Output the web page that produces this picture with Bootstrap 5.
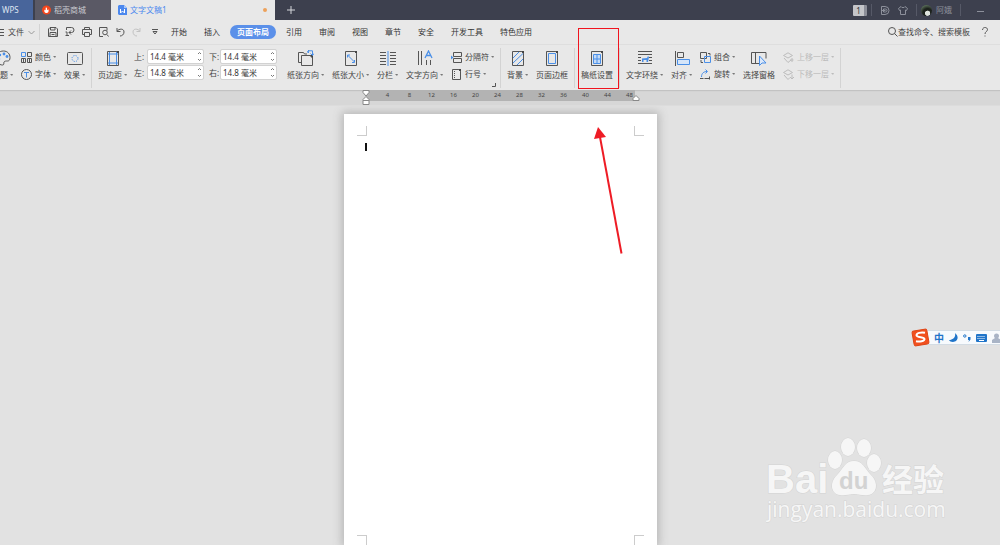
<!DOCTYPE html>
<html lang="zh-CN">
<head>
<meta charset="utf-8">
<meta name="viewport" content="width=device-width, initial-scale=1">
<title>文字文稿1 - WPS</title>
<link href="https://cdn.jsdelivr.net/npm/bootstrap@5.3.0/dist/css/bootstrap.min.css" rel="stylesheet">
<style>
  :root { --ink: #444; --accent: #4a8fe7; --chrome: #e8e8e8; }
  body { font: 8px/12px "Noto Sans", "Noto Sans CJK SC", sans-serif; color: var(--ink); background: #e2e2e2; overflow-x: hidden; }
  svg { display: block; flex: none; fill: none; stroke: #555; stroke-width: 1; }
  .btn { --bs-btn-font-size: 8px; --bs-btn-line-height: 12px; --bs-btn-color: var(--ink); --bs-btn-border-width: 0; --bs-btn-border-radius: 2px; --bs-btn-padding-x: 0; --bs-btn-padding-y: 0; white-space: nowrap; }
  .btn:disabled { --bs-btn-disabled-color: #bcbcbc; --bs-btn-disabled-opacity: 1; }
  .btn:disabled svg { stroke: #bcbcbc; }
  a { color: inherit; text-decoration: none; white-space: nowrap; }

  .titlebar { height: 20px; background: #3d404e; color: #8d909b; }
  .titlebar svg { stroke: #8d909b; }
  .tab-home { width: 33px; padding-left: 2px; background: #48659b; color: #dfe6f2; }
  .tab-store { width: 76px; margin-left: 2px; padding-left: 7px; gap: 3px; background: #5a5965; color: #c9c9ce; }
  .tab-doc { width: 164px; padding: 0 8px 0 7px; gap: 3px; background: var(--chrome); color: #4c88ee; }
  .tab-home, .tab-store, .tab-doc { display: flex; align-items: center; }
  .dot { width: 4px; height: 4px; border-radius: 50%; background: #eda15a; }
  .divide { width: 1px; height: 12px; background: #565967; }
  .count { width: 14px; height: 11px; line-height: 11px; background: #c4c5c9; border-right: 3px solid #8c8e98; color: #333; border-radius: 1px; }
  .avatar { width: 11px; height: 11px; border-radius: 50%; background: radial-gradient(circle at 60% 75%, #dde3dc 0 22%, #1c221c 28% 45%, #5c725a 80%); }

  .menubar { height: 25px; background: var(--chrome); border-bottom: 1px solid #dedede; }
  .quick { gap: 7px; }
  .menus { gap: 17px; margin-left: 13px; color: #333; }
  .menus .current { padding: 0 7px; margin: 0 -7px; border-radius: 7px; line-height: 14px; background: #5b90e9; color: #fff; font-weight: 700; }
  .rule { width: 1px; flex: none; align-self: stretch; background: #d3d3d3; }

  .ribbon { height: 45px; padding: 3px 0 2px; margin-left: -8px; gap: 8px; background: var(--chrome); box-shadow: 0 1px 1px #c2c2c2; position: relative; }
  .ribbon > * { flex: none; }
  .ribbon > .rule { margin: 0 -2px; }
  .tool { display: flex; flex-direction: column; align-items: center; padding-top: 2px; gap: 3px; height: 34px; }
  .tool svg { width: 16px; height: 16px; }
  .pair { display: flex; flex-direction: column; gap: 5px; padding-top: 3px; }
  .pair .btn { display: flex; align-items: center; gap: 3px; }
  .pair svg { width: 11px; height: 11px; }
  .caret::after { content: ""; display: inline-block; margin-left: 2px; vertical-align: 2px; border: solid transparent; border-width: 2px 1px 0 2px; border-top-color: #777; }
  .btn:disabled .caret::after { border-top-color: #bcbcbc; }
  .margins { display: grid; grid-template-columns: 10px 55px 12px 57px; column-gap: 3px; row-gap: 1px; margin: 1px 2px 0 -1px; align-content: start; align-items: center; }
  .margins label:nth-of-type(even) { padding-left: 1px; }
  .spin { position: relative; width: 57px; }
  .spin .form-control { height: 15px; padding: 0 2px; font: inherit; color: #333; border: 1px solid #d2d2d2; border-radius: 2px; }
  .spin svg { position: absolute; right: 2px; top: 2px; stroke: #777; }
  .launcher { position: absolute; right: -2px; bottom: 1px; }
  .callout { position: absolute; left: -3px; right: -6px; top: -20px; height: 61px; border: 1px solid #f0141e; pointer-events: none; }
  .pointer { position: absolute; left: 10px; top: 76px; z-index: 3; pointer-events: none; }
  .b { stroke: var(--accent); }

  .ruler { height: 16px; background: #d7d7d7; border-bottom: 1px solid #dcdcdc; }
  .scale { width: 269px; height: 11px; padding-left: 11px; background: #b3b3b3; font-size: 6px; line-height: 11px; color: #444; position: relative; }
  .scale span { flex: none; width: 22px; text-align: center; }
  .scale svg { position: absolute; top: 0; fill: #fff; stroke: #888; }
  .indent { left: -4px; }
  .outdent { right: -5px; }

  .paper { width: 313px; margin-top: 8px; padding: 12px 13px 0; background: #fff; box-shadow: 0 0 9px 2px #b5b5b5; }
  .crop { width: 10px; height: 10px; border-color: #ccc !important; }
  .write { width: 2px; height: 8px; margin: 7px 0 0 8px; background: #111; }
  .ime { position: absolute; right: 0; top: 328px; height: 19px; }
  .ime .strip { height: 15px; gap: 5px; margin-left: -12px; padding: 0 0 0 15px; background: #f7fafd; border: 1px solid #d3dce4; border-right: 0; font-weight: 700; font-size: 10px; color: #1f74c9; width: 82px; overflow: hidden; }
  .logo { position: relative; z-index: 1; }
  .brand { position: absolute; right: 52px; bottom: 20px; }
  .brand text, .brand .paw { fill: #f6f6f6; stroke: #d3d3d3; stroke-width: 1; paint-order: stroke; }
</style>
</head>
<body class="min-vh-100 d-flex flex-column position-relative">

<header>
  <div class="titlebar d-flex align-items-center">
    <a href="#" class="tab-home h-100">WPS</a>
    <a href="#" class="tab-store h-100">
      <svg width="9" height="10" viewBox="0 0 9 10"><circle cx="4.5" cy="5" r="4.5" fill="#f4471c" stroke="none"/><path d="M4 2.2c2 1 .6 2.4 1.2 2.8.5.3.8-.4.7-1C7.400 5.500 6.500 8 4.500 8 2.300 8 1.800 6 2.600 4.500c.3.8.8.9 1 .3.3-.9-.2-1.600.4-2.600z" fill="#fff" stroke="none"/></svg>
      稻壳商城</a>
    <a href="#" class="tab-doc h-100">
      <svg width="9" height="10" viewBox="0 0 9 10"><path d="M1 0h5l3 3v7H1L0 9V1z" fill="#4c88ee" stroke="none"/><path d="M6 0v3h3z" fill="#a9c7f8" stroke="none"/><path d="M2.500 4v4L4.500 6l2 2V4" style="stroke:#fff"/></svg>
      文字文稿1 <span class="dot ms-auto"></span></a>
    <button class="btn ms-2 px-1" aria-label="新建"><svg width="8" height="8" viewBox="0 0 8 8"><path d="M4 0v8M0 4h8" style="stroke:#d6d7db"/></svg></button>
    <div class="d-flex align-items-center ms-auto me-3">
      <span class="count text-center">1</span>
      <span class="divide ms-1"></span>
      <svg class="ms-2" width="10" height="9" viewBox="0 0 10 9"><path d="M1.500.5h3.500a4 4 0 0 1 0 8H1.500zM3.500 3h2a1.500 1.500 0 0 1 0 3h-2zM1.500 4.500h4"/></svg>
      <svg class="ms-2" width="10" height="9" viewBox="0 0 10 9"><path d="M3 .5L.5 2.500l1 2L2.500 4v4.500h5V4l1 .5 1-2L7 .5C6.500 2 3.500 2 3 .5z"/></svg>
      <span class="divide ms-2 me-1"></span>
      <span class="avatar"></span>
      <span class="ms-1">阿娥</span>
      <span class="divide ms-2 me-3"></span>
      <svg width="7" height="3" viewBox="0 0 7 3"><path d="M0 2.500h7"/></svg>
    </div>
  </div>

  <nav class="menubar d-flex align-items-center">
    <button class="btn d-flex align-items-center">
      <svg width="8" height="8" viewBox="0 0 8 8"><path d="M0 1.500h4M0 4.500h4M0 7.500h4"/></svg>文件
      <svg class="ms-1" width="7" height="5" viewBox="0 0 7 5"><path d="M.5 1l3 3 3-3" stroke="#999"/></svg></button>
    <span class="rule my-1 ms-1 me-2"></span>
    <div class="quick d-flex align-items-center">
      <button class="btn" aria-label="保存"><svg width="10" height="10" viewBox="0 0 10 10"><path d="M.5 2L2 .5h6L9.500 2v7.500h-9zM2.500.5v2.500h4.500V.5M2 9.500V5.500h6v4M3.500 7.500h3"/></svg></button>
      <button class="btn" aria-label="输出为PDF"><svg width="10" height="10" viewBox="0 0 10 10"><path d="M1.500 3V.5h5a2.500 2.500 0 0 1 0 5H4M6 3.500l-2 2 2 2M.5 5h1.500v3.500H.5M2 8.500h2"/></svg></button>
      <button class="btn" aria-label="打印"><svg width="10" height="10" viewBox="0 0 10 10"><path d="M2.500 2.500v-2h5v2M2.500 7.500h-2v-5h9v5h-2M2.500 5.500h5v4h-5z"/></svg></button>
      <button class="btn" aria-label="打印预览"><svg width="10" height="10" viewBox="0 0 10 10"><path d="M4 9.500H.5v-9h7.500v3M8 7.500l1.500 2"/><circle cx="6" cy="5.500" r="2.300"/></svg></button>
      <button class="btn" aria-label="撤销"><svg width="9" height="10" viewBox="0 0 9 10"><path d="M1 1v3.500h3.500M1 4.200C3 1.500 8 1.200 8 5 8 7.500 6 9 4 9"/></svg></button>
      <button class="btn" aria-label="恢复"><svg width="9" height="10" viewBox="0 0 9 10" style="stroke:#c2c2c2"><path d="M8 1v3.500H4.500M8 4.200C6 1.500 1 1.200 1 5c0 2.500 2 4 4 4"/></svg></button>
      <button class="btn ms-1" aria-label="更多"><svg width="6" height="6" viewBox="0 0 6 6"><path d="M0 .5h6M1 2.500h4L3 5z"/></svg></button>
    </div>
    <div class="menus d-flex align-items-center">
      <a href="#">开始</a><a href="#">插入</a><a href="#" class="current">页面布局</a><a href="#">引用</a><a href="#">审阅</a><a href="#">视图</a><a href="#">章节</a><a href="#">安全</a><a href="#">开发工具</a><a href="#">特色应用</a>
    </div>
    <button class="btn ms-auto d-flex align-items-center"><svg width="10" height="10" viewBox="0 0 10 10"><circle cx="4" cy="4" r="3.500"/><path d="M6.500 6.500l3 3"/></svg>查找命令、搜索模板</button>
    <button class="btn ms-2 me-2 px-1" aria-label="帮助"><svg width="6" height="10" viewBox="0 0 6 10"><path d="M.5 3C.5-.3 5.500-.3 5.500 2.700 5.500 4.500 3 4.500 3 7M3 8.500v1"/></svg></button>
  </nav>

  <div class="ribbon d-flex">
    <button class="btn tool"><svg viewBox="0 0 16 16"><path d="M8.500 1C4 1 1 4 1 8s3 7 6.500 7c2 0 1-2 1.500-3s2-1 3.500-1S15 10 15 7.500C15 4 12.500 1 8.500 1z"/><g fill="#4a8fe7" stroke="none"><circle cx="9" cy="4" r="1.400"/><circle cx="12" cy="6.500" r="1.400"/><circle cx="5" cy="5" r="1.200"/><circle cx="4" cy="9" r="1.200"/></g></svg><span class="caret">主题</span></button>
    <div class="pair">
      <button class="btn"><svg viewBox="0 0 11 11"><path class="b" d="M.5.5h4v4h-4z"/><path d="M6.500.5h4v4h-4zM.5 6.500h4v4h-4zM6.500 6.500h4v4h-4zM8.500 6.500v4M2.500 6.500v4"/></svg><span class="caret">颜色</span></button>
      <button class="btn"><svg viewBox="0 0 11 11"><circle cx="5.500" cy="5.500" r="5"/><path class="b" d="M3 3.500h5M5.500 3.500v5"/></svg><span class="caret">字体</span></button>
    </div>
    <button class="btn tool"><svg viewBox="0 0 16 16"><rect x=".5" y="2.500" width="15" height="12" rx="1"/><circle class="b" cx="8" cy="8.500" r="3" stroke-dasharray="1.200 1.200"/></svg><span class="caret">效果</span></button>
    <span class="rule"></span>
    <button class="btn tool"><svg viewBox="0 0 16 16"><path d="M2.500 1.500h9l2 2v12h-11z"/><path class="b" d="M4.500 2v13M11.500 2v13M3 4h10M3 13h10"/><path d="M11 1l3 3V1z" fill="#444" stroke="none"/></svg><span class="caret">页边距</span></button>
    <div class="margins">
      <label for="mt">上:</label><div class="spin"><input id="mt" class="form-control" value="14.4 毫米"><svg width="5" height="11" viewBox="0 0 5 11"><path d="M1 3l1.500-1.500L4 3M1 8l1.500 1.500L4 8"/></svg></div>
      <label for="mb" class="ps-1">下:</label><div class="spin"><input id="mb" class="form-control" value="14.4 毫米"><svg width="5" height="11" viewBox="0 0 5 11"><path d="M1 3l1.500-1.500L4 3M1 8l1.500 1.500L4 8"/></svg></div>
      <label for="ml">左:</label><div class="spin"><input id="ml" class="form-control" value="14.8 毫米"><svg width="5" height="11" viewBox="0 0 5 11"><path d="M1 3l1.500-1.500L4 3M1 8l1.500 1.500L4 8"/></svg></div>
      <label for="mr" class="ps-1">右:</label><div class="spin"><input id="mr" class="form-control" value="14.8 毫米"><svg width="5" height="11" viewBox="0 0 5 11"><path d="M1 3l1.500-1.500L4 3M1 8l1.500 1.500L4 8"/></svg></div>
    </div>
    <button class="btn tool"><svg viewBox="0 0 16 16"><path d="M3 12.500H.5v-10h5l1 1.500H9"/><path d="M3.500 5.500H12l2.500 2.500v7.500h-11z"/><path d="M11.500 5l3.500 3.500V5z" fill="#444" stroke="none"/><path class="b" d="M9.500 2.500L11 .8h3.500V5M12.500 3.500l2 2 1.500-2M11 0l-1.500 1.500L11 3"/></svg><span class="caret">纸张方向</span></button>
    <button class="btn tool"><svg viewBox="0 0 16 16"><path d="M2.500 1.500h9l2 2v12h-11z"/><path d="M11 1l3 3V1z" fill="#444" stroke="none"/><path class="b" d="M4.500 5l7 7M4.500 7.500V5H7M9 12.500h2.500V10"/></svg><span class="caret">纸张大小</span></button>
    <button class="btn tool"><svg viewBox="0 0 16 16"><path d="M0 2.500h6M0 5.500h6M0 8.500h6M0 11.500h6M0 14.500h6M10 2.500h6M10 5.500h6M10 8.500h6M10 11.500h6M10 14.500h6"/><path class="b" d="M8 1v15"/></svg><span class="caret">分栏</span></button>
    <button class="btn tool"><svg viewBox="0 0 16 16"><path d="M1.500 1v14M4.500 1v14M9.500 10v5M13.500 10v5"/><path class="b" d="M8 8l3.500-7L15 8M9.200 5.500h4.600" stroke-width="1.300"/></svg><span class="caret">文字方向</span></button>
    <div class="pair position-relative">
      <button class="btn"><svg viewBox="0 0 11 11"><path d="M2.500 4.500v-4h8v4zM2.500 10.500v-4h8v4z"/><path d="M0 3.500l2.500 2L0 7.500z" fill="#4a8fe7" stroke="none"/></svg><span class="caret">分隔符</span></button>
      <button class="btn"><svg viewBox="0 0 11 11"><path d="M1.500.5h6l2 2v8h-8z"/><path d="M3.500 2v7" stroke-dasharray="1 1"/><path d="M7 0l3 3V0z" fill="#444" stroke="none"/></svg><span class="caret">行号</span></button>
      <svg class="launcher" style="width:4px;height:4px" viewBox="0 0 4 4"><path d="M0 3.500h3.500V0"/></svg>
    </div>
    <span class="rule"></span>
    <button class="btn tool"><svg viewBox="0 0 16 16"><path class="b" d="M3 8l6-6M3 13L13 3.500M7 15l6-6"/><path d="M2.500 1.500h9l2 2v12h-11z"/><path d="M11 1l3 3V1z" fill="#444" stroke="none"/></svg><span class="caret">背景</span></button>
    <button class="btn tool"><svg viewBox="0 0 16 16"><path d="M2.500 1.500h9l2 2v12h-11z"/><path class="b" d="M4.500 3.500h7v10h-7z"/><path d="M11 1l3 3V1z" fill="#444" stroke="none"/></svg><span>页面边框</span></button>
    <span class="rule"></span>
    <div class="position-relative">
      <button class="btn tool"><svg viewBox="0 0 16 16"><path d="M2.500 1.500h9l2 2v12h-11z"/><path class="b" fill="#c4dbf7" d="M4.500 4.500h7v9h-7zM8 4v10M4 9h8"/><path d="M11 1l3 3V1z" fill="#444" stroke="none"/></svg><span>稿纸设置</span></button>
      <span class="callout"></span>
      <svg class="pointer" width="36" height="132" viewBox="0 0 36 132"><path d="M30.500 129.500L9 13" stroke="#ee1c25" stroke-width="2"/><path d="M7 3L3 15l12-2z" fill="#ee1c25" stroke="none"/></svg>
    </div>
    <span class="rule"></span>
    <button class="btn tool"><svg viewBox="0 0 16 16"><path d="M1 1.500h14M1 4.500h14M1 7.500h3M1 10.500h3M12 7.500h3M12 10.500h3M1 13.500h14"/><path d="M5 12V8.500L10 8l1-2 1 1-1 5H9.500v-2h-3v2z" fill="#4a8fe7" stroke="none"/></svg><span class="caret">文字环绕</span></button>
    <button class="btn tool"><svg viewBox="0 0 16 16"><path d="M1.500 1v15M3.500 2.500h6v5h-6z"/><path class="b" fill="#d5e5f9" d="M3.500 9.500h12v5h-12z"/></svg><span class="caret">对齐</span></button>
    <div class="pair">
      <button class="btn"><svg viewBox="0 0 11 11"><path d="M.5.5h6v6h-6zM8 1.500h2v2M1 8v2.500h2"/><path class="b" d="M4.500 4.500h6v6h-6z"/></svg><span class="caret">组合</span></button>
      <button class="btn"><svg viewBox="0 0 11 11"><path class="b" d="M1.500 8C1.500 4 4 2.500 7 2.500M5.500.5l2 2-2 2"/><path d="M0 9.500h3.500M4.500 9.500h5M9.500 7.500v3"/></svg><span class="caret">旋转</span></button>
    </div>
    <button class="btn tool"><svg viewBox="0 0 16 16"><path d="M8 13.500H.5v-11h14.500v6M4.500 2.500v11"/><path class="b" fill="#dbe8fa" d="M8.500 6v9.500l2.500-2.500h4z"/></svg><span>选择窗格</span></button>
    <div class="pair">
      <button class="btn" disabled><svg viewBox="0 0 11 11"><path d="M.5 3.500L5 .8l4.500 2.700L5 6zM1 6l4 4.500L8 8M7 8h3.500M9 6v4"/></svg><span class="caret">上移一层</span></button>
      <button class="btn" disabled><svg viewBox="0 0 11 11"><path d="M.5 3.500L5 .8l4.500 2.700L5 6zM1 6l4 4.500 2-2M7 8l2 2 2-2M9 5.500V10"/></svg><span class="caret">下移一层</span></button>
    </div>
    <span class="rule"></span>
  </div>

  <div class="ruler d-flex justify-content-center">
    <div class="scale d-flex">
      <span>4</span><span>8</span><span>12</span><span>16</span><span>20</span><span>24</span><span>28</span><span>32</span><span>36</span><span>40</span><span>44</span><span>48</span>
      <svg class="indent" width="8" height="15" viewBox="0 0 8 15"><path d="M1 .5h6v2L4 6 1 2.500zM1 9.500L4 6.500l3 3v1H1zM1 10.500h6v4H1z"/></svg>
      <svg class="outdent" width="8" height="11" viewBox="0 0 8 11"><path d="M1 10.500v-2l3-3 3 3v2z"/></svg>
    </div>
  </div>
</header>

<main class="flex-grow-1 d-flex justify-content-center overflow-hidden">
  <article class="paper d-flex flex-column">
    <div class="d-flex justify-content-between">
      <span class="crop border-end border-bottom"></span><span class="crop border-start border-bottom"></span>
    </div>
    <div class="write"></div>
    <div class="d-flex justify-content-between mt-auto">
      <span class="crop border-end border-top"></span><span class="crop border-start border-top"></span>
    </div>
  </article>
</main>

<aside class="ime d-flex align-items-center">
  <svg class="logo" width="19" height="19" viewBox="0 0 19 19"><rect x="2" y="2" width="15" height="15" rx="2" transform="rotate(-10 9.500 9.500)" fill="#f1501f" stroke="#e04414"/><path d="M14 4.800C10 4 5.500 5 5.500 7.200c0 2.600 8 1.300 8 3.800 0 2.200-5 3-8.500 2.200" stroke="#fff" stroke-width="2"/></svg>
  <div class="strip d-flex align-items-center"><span>中</span>
    <svg width="9" height="9" viewBox="0 0 9 9"><path d="M6 0c5 4 2 9-2 9-2 0-3.500-1-4-2 4 0 7-3 6-7z" fill="#1f74c9" stroke="none"/></svg>
    <svg width="8" height="9" viewBox="0 0 8 9"><circle cx="1.800" cy="3" r="1.200" stroke="#1f74c9"/><path d="M5 4h2.500v2.500L5.500 9l.5-2H5z" fill="#1f74c9" stroke="none"/></svg>
    <svg width="11" height="8" viewBox="0 0 11 8"><rect width="11" height="8" rx="1" fill="#1f74c9" stroke="none"/><path d="M1.500 2.500h8M1.500 4.500h8" stroke="#fff" stroke-dasharray="1 1"/><path d="M3 6.500h5" stroke="#fff"/></svg>
    <svg width="9" height="10" viewBox="0 0 9 10"><path d="M2 3a2.500 2.500 0 0 1 5 0 2.500 2.500 0 0 1-1 2l3 2v3H0V7l3-2a2.500 2.500 0 0 1-1-2z" fill="#a9b4c6" stroke="none"/></svg>
  </div>
</aside>

<svg class="brand" width="182" height="90" viewBox="0 0 182 90" aria-label="Baidu 经验">
  <text x="0" y="58" font-family="Liberation Sans, sans-serif" font-weight="700" font-size="40">Bai</text>
  <g class="paw"><ellipse cx="69" cy="25" rx="7" ry="9"/><ellipse cx="82" cy="12" rx="7" ry="9"/><ellipse cx="98" cy="13" rx="7" ry="9"/><ellipse cx="108" cy="28" rx="7" ry="9"/><path d="M88 26c9 0 11 8 17 14 8 8 6 19-3 20-5 1-9-1-14-1s-9 2-14 1c-9-1-11-12-3-20 6-6 8-14 17-14z"/></g>
  <text x="73" y="54" font-family="Liberation Sans, sans-serif" font-weight="700" font-size="24" style="fill:#d3d3d3;stroke:none">du</text>
  <text x="116" y="56" font-family="Noto Sans CJK SC, sans-serif" font-weight="700" font-size="31">经验</text>
  <text x="1" y="82" font-family="Open Sans, sans-serif" font-size="21">jingyan.baidu.com</text>
</svg>

<script src="https://cdn.jsdelivr.net/npm/bootstrap@5.3.0/dist/js/bootstrap.bundle.min.js"></script>
</body>
</html>
